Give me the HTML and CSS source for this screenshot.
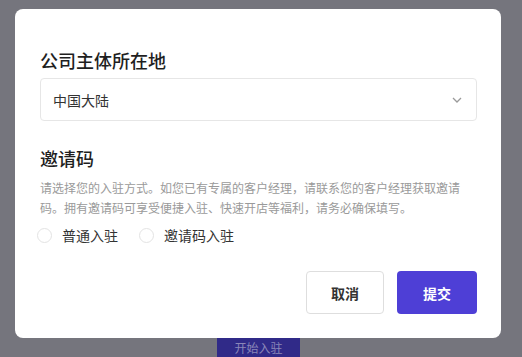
FILE: index.html
```html
<!DOCTYPE html>
<html lang="zh-CN">
<head>
	<meta charset="UTF-8">
	<title>入驻</title>
	<link rel="stylesheet" href="styles.css">
</head>
<body>
	<div class="modal">
		<h2 class="title">公司主体所在地</h2>
		<div class="select">
			<span>中国大陆</span>
			<svg class="arrow" width="10" height="6" viewBox="0 0 10 6"><path d="M1 1l4 4 4-4" fill="none" stroke="#9a9a9a" stroke-width="1.3"/></svg>
		</div>
		<h2 class="title second">邀请码</h2>
		<p class="desc">请选择您的入驻方式。如您已有专属的客户经理，请联系您的客户经理获取邀请码。拥有邀请码可享受便捷入驻、快速开店等福利，请务必确保填写。</p>
		<div class="radios">
			<label class="radio"><i></i>普通入驻</label>
			<label class="radio"><i></i>邀请码入驻</label>
		</div>
		<div class="btns">
			<button class="btn cancel">取消</button>
			<button class="btn submit">提交</button>
		</div>
	</div>
	<div class="start">开始入驻</div>
</body>
</html>
```
FILE: styles.css
```css
*{
	margin: 0;
	padding: 0;
	box-sizing: border-box;
}
body{
	background: #75757d;
	font-family: "Noto Sans CJK SC", "Noto Sans", sans-serif;
	width: 522px;
	height: 357px;
	overflow: hidden;
}
.modal{
	width: 486px;
	height: 329px;
	margin: 9px 0 0 15px;
	background: #fff;
	border-radius: 8px;
	padding: 39px 24px 0 25px;
}
.title{
	font-size: 18px;
	line-height: 24px;
	font-weight: 500;
	color: #1f1f1f;
}
.title.second{
	margin-top: 25px;
}
.select{
	margin-top: 6px;
	height: 43px;
	border: 1px solid #e6e6e6;
	border-radius: 4px;
	display: flex;
	align-items: center;
	justify-content: space-between;
	padding: 0 14px 0 12px;
	font-size: 14px;
	color: #333;
}
.desc{
	margin-top: 8px;
	font-size: 12px;
	line-height: 20px;
	color: #9a9a9a;
	width: 420px;
}
.radios{
	margin-top: 5px;
	height: 24px;
	display: flex;
	align-items: center;
	gap: 24px;
	font-size: 14px;
	color: #333;
}
.radio{
	display: flex;
	align-items: center;
}
.radio i{
	width: 15px;
	height: 15px;
	border: 1px solid #e3e3e3;
	border-radius: 50%;
	margin: 0 10px 0 -3px;
}
.btns{
	margin-top: 24px;
	display: flex;
	justify-content: flex-end;
	gap: 13px;
	padding-right: 0;
}
.btn{
	height: 43px;
	border-radius: 4px;
	font-family: inherit;
	font-size: 14px;
	font-weight: 700;
}
.cancel{
	width: 78px;
	background: #fff;
	border: 1px solid #dedede;
	color: #333;
}
.submit{
	width: 80px;
	background: #4e3fd6;
	border: none;
	color: #fff;
}
.start{
	width: 83px;
	height: 20px;
	margin: 0 0 0 217px;
	background: #302a88;
	color: #8a86b8;
	font-size: 12px;
	line-height: 20px;
	text-align: center;
}
```
